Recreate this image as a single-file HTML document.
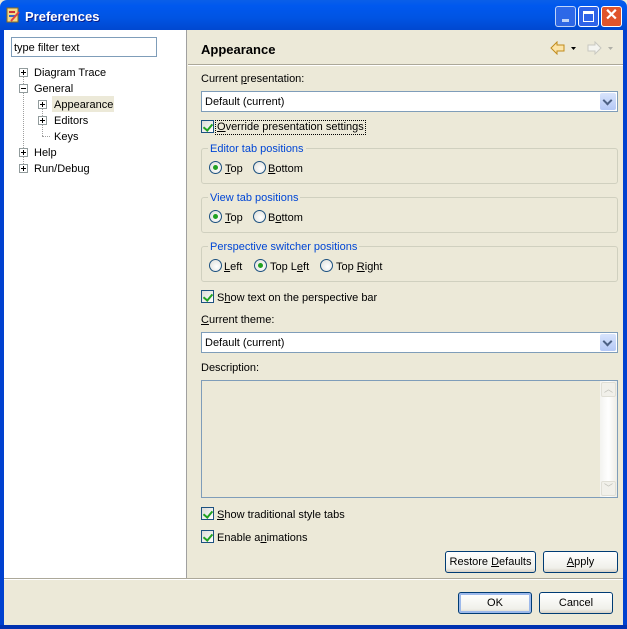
<!DOCTYPE html>
<html><head><meta charset="utf-8"><style>
*{margin:0;padding:0;box-sizing:border-box}
body{width:627px;height:629px;overflow:hidden;font-family:"Liberation Sans",Tahoma,sans-serif;font-size:11px;color:#000;background:#ECE9D8;position:relative}
.a{position:absolute}
.t{position:absolute;white-space:nowrap;line-height:13px;margin-top:1px}
.cb{position:absolute;width:13px;height:13px;border:1px solid #1C5180;background:linear-gradient(135deg,#DCDCD7,#fff)}
.cb::after{content:"";position:absolute;left:3px;top:1px;width:4px;height:7px;border:solid #21A121;border-width:0 2px 2px 0;transform:rotate(40deg)}
.rd{position:absolute;width:13px;height:13px;border:1px solid #1C5180;border-radius:50%;background:radial-gradient(circle at 60% 60%,#fff,#DCDCD7)}
.rd.on::after{content:"";position:absolute;left:3px;top:3px;width:5px;height:5px;border-radius:50%;background:#21A121}
.grp{position:absolute;border:1px solid #D0D0BF;border-radius:3px;left:201px;width:417px;height:36px}
.gl{position:absolute;color:#0046D5;background:#ECE9D8;padding:0 2px;line-height:13px;top:-6px;left:6px}
.combo{position:absolute;left:201px;width:417px;height:21px;border:1px solid #7F9DB9;background:#fff}
.combo .v{position:absolute;left:3px;top:3px}
.combo .btn{position:absolute;right:1px;top:1px;width:16px;height:17px;background:linear-gradient(#D8E4FC,#B4C8F6);border-radius:2px}
.combo .btn::after{content:"";position:absolute;left:4px;top:4px;width:5px;height:5px;border:solid #4D6185;border-width:0 2px 2px 0;transform:rotate(45deg)}
.pb{position:absolute;border:1px solid #003C74;border-radius:3px;background:linear-gradient(#fff,#F0F0EA 80%,#D6D0C5);text-align:center;line-height:21px}
.exp{position:absolute;width:9px;height:9px;border:1px solid #919B9C;background:#fff}
.exp::before{content:"";position:absolute;left:1px;top:3px;width:5px;height:1px;background:#000}
.exp.p::after{content:"";position:absolute;left:3px;top:1px;width:1px;height:5px;background:#000}
u{text-decoration:underline}
</style></head><body>
<div class="a" style="left:0;top:0;width:627px;height:30px;background:linear-gradient(#0A5FE8,#0058EE 20%,#0054E3 60%,#0048D0);border-radius:7px 7px 0 0"></div>
<div class="a" style="left:0;top:30px;width:4px;height:599px;background:#0041D0"></div>
<div class="a" style="left:623px;top:30px;width:4px;height:599px;background:#0041D0"></div>
<div class="a" style="left:0;top:625px;width:627px;height:4px;background:#0031B0"></div>
<svg class="a" style="left:5px;top:7px" width="16" height="16"><rect x="2" y="1" width="11" height="14" fill="#F3D98A" stroke="#8A6A20"/><rect x="4" y="4" width="6" height="2" fill="#C33"/><rect x="4" y="8" width="6" height="2" fill="#36C"/><path d="M6 14 L14 5" stroke="#D44" stroke-width="2"/></svg>
<div class="t" style="left:25px;top:9px;color:#fff;font-weight:bold;font-size:13px;text-shadow:1px 1px #0A1E8C">Preferences</div>
<div class="a" style="left:555px;top:6px;width:21px;height:21px;border:1px solid #fff;border-radius:3px;background:#3C6FE8;opacity:.75"><div class="a" style="left:6px;top:12px;width:7px;height:3px;background:#fff"></div></div>
<div class="a" style="left:578px;top:6px;width:21px;height:21px;border:1px solid #fff;border-radius:3px;background:#2F63E8"><div class="a" style="left:4px;top:4px;width:11px;height:11px;border:1px solid #fff;border-top-width:3px"></div></div>
<div class="a" style="left:601px;top:6px;width:21px;height:21px;border:1px solid #fff;border-radius:3px;background:#E0542C;color:#fff;font-weight:bold;font-size:16px;line-height:18px;text-align:center">✕</div>

<div class="a" style="left:4px;top:30px;width:183px;height:548px;background:#fff;border-right:1px solid #A0A0A0"></div>
<div class="a" style="left:11px;top:37px;width:146px;height:20px;border:1px solid #7F9DB9;background:#fff"><span class="t" style="left:2px;top:3px">type filter text</span></div>
<div class="a" style="left:23px;top:77px;height:91px;border-left:1px dotted #A0A0A0"></div>
<div class="a" style="left:42px;top:108px;height:28px;border-left:1px dotted #A0A0A0"></div>
<div class="a" style="left:42px;top:136px;width:8px;border-top:1px dotted #A0A0A0"></div>
<div class="exp p" style="left:19px;top:68px"></div><span class="t" style="left:34px;top:66px">Diagram Trace</span>
<div class="exp" style="left:19px;top:84px"></div><span class="t" style="left:34px;top:82px">General</span>
<div class="a" style="left:52px;top:96px;width:62px;height:16px;background:#ECE9D8"></div>
<div class="exp p" style="left:38px;top:100px"></div><span class="t" style="left:54px;top:98px">Appearance</span>
<div class="exp p" style="left:38px;top:116px"></div><span class="t" style="left:54px;top:114px">Editors</span>
<span class="t" style="left:54px;top:130px">Keys</span>
<div class="exp p" style="left:19px;top:148px"></div><span class="t" style="left:34px;top:146px">Help</span>
<div class="exp p" style="left:19px;top:164px"></div><span class="t" style="left:34px;top:162px">Run/Debug</span>

<div class="t" style="left:201px;top:41px;font-weight:bold;font-size:13px;line-height:15px">Appearance</div>
<div class="a" style="left:188px;top:64px;width:435px;height:2px;border-top:1px solid #ACA899;border-bottom:1px solid #fff"></div>
<svg class="a" style="left:550px;top:41px" width="70" height="14"><path d="M1 7 L7 1 V4 H14 V10 H7 V13 Z" fill="#FCE4A8" stroke="#C08A1A"/><path d="M21 6 h5 l-2.5 3z" fill="#000"/><path d="M51 7 L45 1 V4 H38 V10 H45 V13 Z" fill="#F4F4F0" stroke="#C8C8C0"/><path d="M58 6 h5 l-2.5 3z" fill="#B0B0A8"/></svg>

<span class="t" style="left:201px;top:72px">Current <u>p</u>resentation:</span>
<div class="combo" style="top:91px"><span class="t v">Default (current)</span><div class="btn"></div></div>
<div class="cb" style="left:201px;top:120px"></div>
<span class="t" style="left:216px;top:120px;outline:1px dotted #000;padding:0 1px"><u>O</u>verride presentation settings</span>

<div class="grp" style="top:148px"><span class="gl">Editor tab positions</span></div>
<div class="rd on" style="left:209px;top:161px"></div><span class="t" style="left:225px;top:162px"><u>T</u>op</span>
<div class="rd" style="left:253px;top:161px"></div><span class="t" style="left:268px;top:162px"><u>B</u>ottom</span>

<div class="grp" style="top:197px"><span class="gl">View tab positions</span></div>
<div class="rd on" style="left:209px;top:210px"></div><span class="t" style="left:225px;top:211px"><u>T</u>op</span>
<div class="rd" style="left:253px;top:210px"></div><span class="t" style="left:268px;top:211px">B<u>o</u>ttom</span>

<div class="grp" style="top:246px"><span class="gl">Perspective switcher positions</span></div>
<div class="rd" style="left:209px;top:259px"></div><span class="t" style="left:224px;top:260px"><u>L</u>eft</span>
<div class="rd on" style="left:254px;top:259px"></div><span class="t" style="left:270px;top:260px">Top L<u>e</u>ft</span>
<div class="rd" style="left:320px;top:259px"></div><span class="t" style="left:336px;top:260px">Top <u>R</u>ight</span>

<div class="cb" style="left:201px;top:290px"></div><span class="t" style="left:217px;top:291px">S<u>h</u>ow text on the perspective bar</span>
<span class="t" style="left:201px;top:313px"><u>C</u>urrent theme:</span>
<div class="combo" style="top:332px"><span class="t v">Default (current)</span><div class="btn"></div></div>
<span class="t" style="left:201px;top:361px">Description:</span>
<div class="a" style="left:201px;top:380px;width:417px;height:118px;border:1px solid #7F9DB9;background:#ECE9D8">
<div class="a" style="right:0;top:0;width:17px;height:116px;background:linear-gradient(90deg,#F3F3EF,#fff,#EEEDE5)"></div>
<div class="a" style="right:1px;top:1px;width:15px;height:15px;border:1px solid #E0DFD6;border-radius:2px;background:#F1F0EA;color:#C0C0B8;font-size:9px;text-align:center;line-height:13px">︿</div>
<div class="a" style="right:1px;bottom:1px;width:15px;height:15px;border:1px solid #E0DFD6;border-radius:2px;background:#F1F0EA;color:#C0C0B8;font-size:9px;text-align:center;line-height:13px">﹀</div>
</div>
<div class="cb" style="left:201px;top:507px"></div><span class="t" style="left:217px;top:508px"><u>S</u>how traditional style tabs</span>
<div class="cb" style="left:201px;top:530px"></div><span class="t" style="left:217px;top:531px">Enable a<u>n</u>imations</span>
<div class="pb" style="left:445px;top:551px;width:91px;height:22px">Restore <u>D</u>efaults</div>
<div class="pb" style="left:543px;top:551px;width:75px;height:22px"><u>A</u>pply</div>

<div class="a" style="left:4px;top:578px;width:619px;height:2px;border-top:1px solid #ACA899;border-bottom:1px solid #fff"></div>
<div class="pb" style="left:458px;top:592px;width:74px;height:22px;box-shadow:inset 0 0 0 2px #9DB9EB">OK</div>
<div class="pb" style="left:539px;top:592px;width:74px;height:22px">Cancel</div>
</body></html>
